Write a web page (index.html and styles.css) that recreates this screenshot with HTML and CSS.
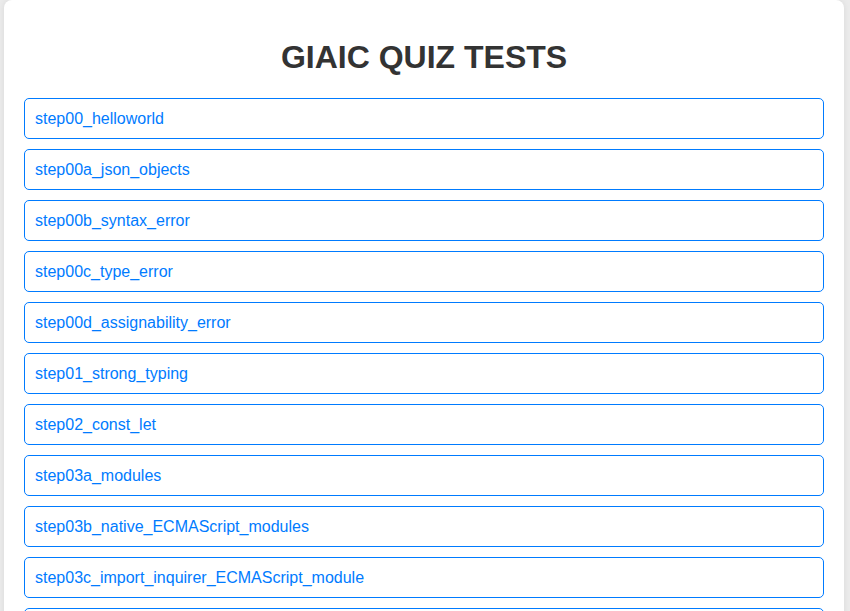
FILE: index.html
```html
<!DOCTYPE html>
<html>
<head>
<meta charset="utf-8">
<link rel="stylesheet" href="styles.css">
</head>
<body>
<div class="card">
  <h1 class="title">GIAIC QUIZ TESTS</h1>
  <ul class="list">
    <li class="item">step00_helloworld</li>
    <li class="item">step00a_json_objects</li>
    <li class="item">step00b_syntax_error</li>
    <li class="item">step00c_type_error</li>
    <li class="item">step00d_assignability_error</li>
    <li class="item">step01_strong_typing</li>
    <li class="item">step02_const_let</li>
    <li class="item">step03a_modules</li>
    <li class="item">step03b_native_ECMAScript_modules</li>
    <li class="item">step03c_import_inquirer_ECMAScript_module</li>
    <li class="item">step04_functions</li>
  </ul>
</div>
</body>
</html>
```
FILE: styles.css
```css
html, body {
  margin: 0;
  padding: 0;
  background: #ebebeb;
  height: 611px;
  overflow: hidden;
}
body {
  font-family: "Liberation Sans", Arial, sans-serif;
  padding: 0 6px 0 4px;
}
.card {
  background: #fff;
  border-radius: 8px;
  padding: 0 20px 20px;
  box-shadow: 0 0 6px rgba(0,0,0,0.08);
}
.title {
  margin: 0;
  padding: 39px 0 22px;
  font-size: 32px;
  line-height: 37px;
  text-align: center;
  color: #333;
  font-weight: bold;
}
.list {
  list-style: none;
  margin: 0;
  padding: 0;
  display: flex;
  flex-direction: column;
  gap: 10px;
}
.item {
  border: 1px solid #007bff;
  border-radius: 5px;
  padding: 0 10px;
  height: 39px;
  display: flex;
  align-items: center;
  font-size: 16px;
  color: #007bff;
}
```
